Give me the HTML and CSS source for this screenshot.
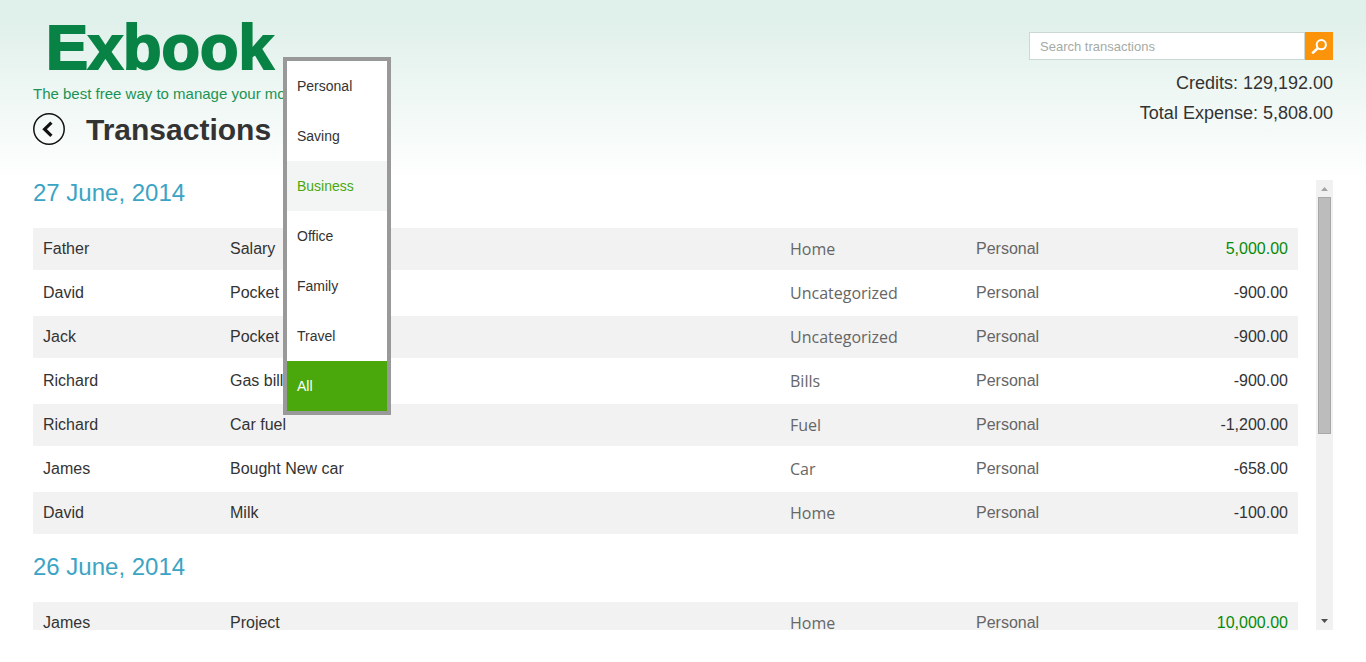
FILE: index.html
```html
<!DOCTYPE html>
<html lang="en">
<head>
  <meta charset="UTF-8" />
  <meta name="viewport" content="width=device-width, initial-scale=1.0" />
  <title>Exbook - Transactions</title>
  <link rel="stylesheet" href="styles.css">
</head>
<body>
  <header class="header">
    <div class="brand">
      <div class="logo">Exbook</div>
      <div class="tagline">The best free way to manage your money</div>
      <div class="title-bar">
        <button class="back-button" type="button" aria-label="Back">
          <svg width="32" height="32" viewBox="0 0 32 32" fill="none" stroke="#111">
            <circle cx="16" cy="16" r="15.2" stroke-width="1.5" />
            <path d="M18.4 9.6 L11.6 16.2 L18.4 22.8" stroke-width="3.2" />
          </svg>
        </button>
        <h1>Transactions</h1>
      </div>
      <ul class="menu">
        <li><button type="button">Personal</button></li>
        <li><button type="button">Saving</button></li>
        <li><button type="button" class="hover">Business</button></li>
        <li><button type="button">Office</button></li>
        <li><button type="button">Family</button></li>
        <li><button type="button">Travel</button></li>
        <li><button type="button" class="selected">All</button></li>
      </ul>
    </div>

    <div class="summary">
      <form class="search">
        <input type="text" placeholder="Search transactions" aria-label="Search transactions" />
        <button type="submit" aria-label="Search">
          <svg width="28" height="28" viewBox="0 0 28 28" fill="none" stroke="#fff">
            <circle cx="16.3" cy="12.7" r="4.6" stroke-width="2" />
            <path d="M13 16 L7.2 21.4" stroke-width="2.6" />
          </svg>
        </button>
      </form>
      <p>Credits: 129,192.00</p>
      <p>Total Expense: 5,808.00</p>
    </div>
  </header>

  <main class="content">
    <div class="list">
      <h2>27 June, 2014</h2>
      <table>
        <tr><td class="who">Father</td><td class="what">Salary</td><td class="category">Home</td><td class="account">Personal</td><td class="amount income">5,000.00</td></tr>
        <tr><td>David</td><td>Pocket money</td><td class="category">Uncategorized</td><td class="account">Personal</td><td class="amount">-900.00</td></tr>
        <tr><td>Jack</td><td>Pocket money</td><td class="category">Uncategorized</td><td class="account">Personal</td><td class="amount">-900.00</td></tr>
        <tr><td>Richard</td><td>Gas bill</td><td class="category">Bills</td><td class="account">Personal</td><td class="amount">-900.00</td></tr>
        <tr><td>Richard</td><td>Car fuel</td><td class="category">Fuel</td><td class="account">Personal</td><td class="amount">-1,200.00</td></tr>
        <tr><td>James</td><td>Bought New car</td><td class="category">Car</td><td class="account">Personal</td><td class="amount">-658.00</td></tr>
        <tr><td>David</td><td>Milk</td><td class="category">Home</td><td class="account">Personal</td><td class="amount">-100.00</td></tr>
      </table>

      <h2>26 June, 2014</h2>
      <table>
        <tr><td class="who">James</td><td class="what">Project</td><td class="category">Home</td><td class="account">Personal</td><td class="amount income">10,000.00</td></tr>
      </table>
    </div>

    <div class="scrollbar">
      <svg class="arrow" width="17" height="17" viewBox="0 0 17 17"><path d="M5 11 L8.5 7 L12 11 Z" fill="#a3a3a3" /></svg>
      <div class="track"><div class="thumb"></div></div>
      <svg class="arrow" width="17" height="17" viewBox="0 0 17 17"><path d="M5 6 L8.5 10 L12 6 Z" fill="#505050" /></svg>
    </div>
  </main>
</body>
</html>
```

FILE: styles.css
```css
* {
  box-sizing: border-box;
}
body {
  margin: 0;
  height: 100vh;
  padding: 0 33px 32px;
  display: flex;
  flex-direction: column;
  background: #fff linear-gradient(#e0f0ea 0, #e0f0ea 20px, #fff 180px) no-repeat;
  color: #333;
  font-family: "Liberation Sans", Arial, sans-serif;
  font-size: 16px;
}
button {
  font-family: inherit;
  border: 0;
  padding: 0;
  background: none;
  cursor: pointer;
}
svg {
  display: block;
}

/* header */
.header {
  display: flex;
  justify-content: space-between;
  height: 180px;
  flex: none;
}
.brand {
  position: relative;
  padding-top: 12px;
}
.logo {
  padding-left: 13px;
  color: #088345;
  font-size: 63px;
  font-weight: bold;
  line-height: 70px;
  -webkit-text-stroke: 2px #088345;
}
.tagline {
  color: #1c9353;
  font-size: 15px;
  line-height: 24px;
}
.title-bar {
  display: flex;
  align-items: center;
  gap: 21px;
  margin-top: 6px;
}
.title-bar h1 {
  margin: 0;
  padding-top: 2px;
  font-size: 30px;
  line-height: 32px;
}

/* account menu */
.menu {
  position: absolute;
  top: 57px;
  left: 250px;
  width: 108px;
  margin: 0;
  padding: 0;
  list-style: none;
  background: #fff;
  border: 4px solid #999;
}
.menu button {
  display: block;
  width: 100%;
  height: 50px;
  padding: 0 10px;
  color: #333;
  font-size: 14px;
  text-align: left;
}
.menu .hover {
  background: #f3f5f4;
  color: #4aa80c;
}
.menu .selected {
  background: #4aa80c;
  color: #fff;
}

/* search and totals */
.summary {
  padding-top: 32px;
  text-align: right;
}
.search {
  display: flex;
  margin-bottom: 8px;
}
.search input {
  width: 276px;
  height: 28px;
  padding: 0 10px;
  border: 1px solid #ccd8d4;
  background: #fff;
  font-family: inherit;
  font-size: 13px;
}
.search input::placeholder {
  color: #a5aba6;
}
.search button {
  width: 28px;
  height: 28px;
  background: #fb940b;
}
.summary p {
  margin: 0;
  font-size: 18px;
  line-height: 30px;
}

/* transactions */
.content {
  display: flex;
  flex: 1;
  gap: 18px;
  min-height: 0;
}
.list {
  flex: 1;
  overflow: hidden;
}
.list h2 {
  margin: 0 0 22px;
  color: #3ba4c4;
  font-size: 24px;
  font-weight: normal;
  line-height: 26px;
}
.list table + h2 {
  margin-top: 18px;
}
table {
  width: 100%;
  table-layout: fixed;
  border-spacing: 0;
}
td {
  height: 44px;
  padding: 0 10px;
  border-bottom: 2px solid #fff;
}
tr:nth-child(odd) {
  background: #f2f2f2;
}
.who {
  width: 187px;
}
.what {
  width: 560px;
}
.category,
.account {
  width: 186px;
  color: #666;
}
.category {
  font-family: "Open Sans", "Noto Sans", sans-serif;
}
.amount {
  text-align: right;
}
.income {
  color: #088a08;
}

/* scrollbar */
.scrollbar {
  display: flex;
  flex-direction: column;
  width: 17px;
  background: #f1f1f1;
}
.track {
  flex: 1;
  padding: 0 2px;
}
.thumb {
  height: 57%;
  background: #bcbcbc;
  border: 1px solid #a8a8a8;
}
```
